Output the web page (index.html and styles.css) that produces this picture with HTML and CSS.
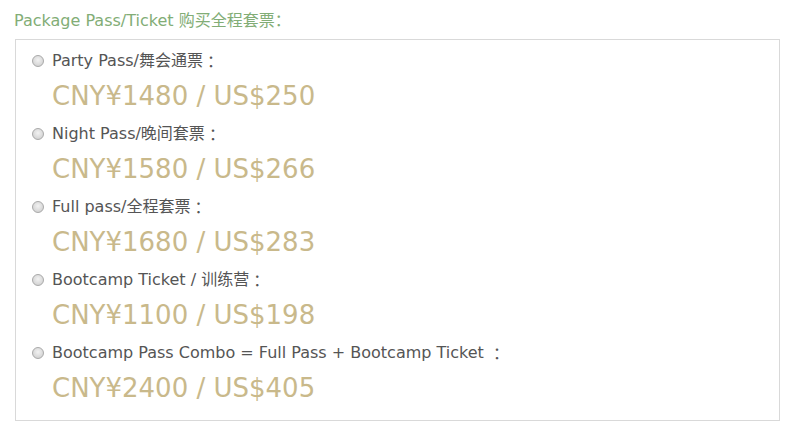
FILE: index.html
```html
<!DOCTYPE html>
<html lang="zh">
<head>
<meta charset="utf-8">
<link rel="stylesheet" href="styles.css">
</head>
<body>
<div class="page">
  <div class="title">Package Pass/Ticket 购买全程套票<span class="colon">：</span></div>
  <div class="box">
    <div class="opt">
      <div class="lab"><span class="radio"></span>Party Pass/舞会通票<span class="colon">：</span></div>
      <div class="price">CNY¥1480 / US$250</div>
    </div>
    <div class="opt">
      <div class="lab"><span class="radio"></span>Night Pass/晚间套票<span class="colon">：</span></div>
      <div class="price">CNY¥1580 / US$266</div>
    </div>
    <div class="opt">
      <div class="lab"><span class="radio"></span>Full pass/全程套票<span class="colon">：</span></div>
      <div class="price">CNY¥1680 / US$283</div>
    </div>
    <div class="opt">
      <div class="lab"><span class="radio"></span>Bootcamp Ticket / 训练营<span class="colon">：</span></div>
      <div class="price">CNY¥1100 / US$198</div>
    </div>
    <div class="opt">
      <div class="lab"><span class="radio"></span>Bootcamp Pass Combo = Full Pass + Bootcamp Ticket <span class="colon">：</span></div>
      <div class="price">CNY¥2400 / US$405</div>
    </div>
  </div>
</div>
</body>
</html>
```
FILE: styles.css
```css
html, body {
  margin: 0;
  padding: 0;
  background: #fff;
}
body {
  font-family: "DejaVu Sans", "Noto Sans CJK SC", sans-serif;
}
.page {
  padding: 8px 13px 0 14px;
}
.title {
  color: #82ad76;
  font-size: 16px;
  line-height: 22px;
  height: 22px;
}
.colon {
  font-family: "Noto Sans CJK TC", sans-serif;
}
.box {
  margin: 9px 0 0 1px;
  border: 1px solid #d9d9d9;
  padding: 10px 16px 14px 16px;
  height: 382px;
  box-sizing: border-box;
}
.opt {
  margin-bottom: 9px;
}
.lab {
  display: flex;
  align-items: center;
  color: #555;
  font-size: 16px;
  line-height: 22px;
  height: 22px;
  white-space: pre;
}
.radio {
  width: 12px;
  height: 12px;
  border-radius: 50%;
  box-sizing: border-box;
  border: 1px solid #a9a9a9;
  background: radial-gradient(circle at 50% 40%, #f2f2f2 0%, #d6d6d6 70%, #c8c8c8 100%);
  margin-right: 8px;
  flex: none;
}
.price {
  color: #c9b98b;
  font-size: 26px;
  line-height: 36px;
  margin-top: 6px;
  padding-left: 20px;
}
```
